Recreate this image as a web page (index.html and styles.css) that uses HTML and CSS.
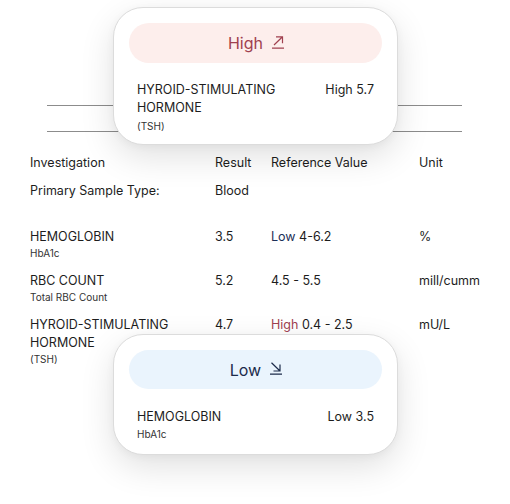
FILE: index.html
```html
<!DOCTYPE html>
<html>
<head>
<meta charset="utf-8">
<link rel="stylesheet" href="styles.css">
</head>
<body>
<div class="page">
  <div class="rules">
    <div class="rule"></div>
    <div class="rule"></div>
  </div>
  <div class="table">
    <div class="row head">
      <div>Investigation</div><div>Result</div><div>Reference Value</div><div>Unit</div>
    </div>
    <div class="row sample">
      <div>Primary Sample Type:</div><div>Blood</div><div></div><div></div>
    </div>
    <div class="row">
      <div>HEMOGLOBIN<div class="sub">HbA1c</div></div><div>3.5</div><div><span class="low">Low</span> 4-6.2</div><div>%</div>
    </div>
    <div class="row">
      <div>RBC COUNT<div class="sub">Total RBC Count</div></div><div>5.2</div><div>4.5 - 5.5</div><div>mill/cumm</div>
    </div>
    <div class="row">
      <div>HYROID-STIMULATING HORMONE<div class="sub">(TSH)</div></div><div>4.7</div><div><span class="high">High</span> 0.4 - 2.5</div><div>mU/L</div>
    </div>
  </div>

  <div class="card card-top">
    <div class="pill pill-high">High
      <svg class="icon" width="14" height="13" viewBox="0 0 14 13" fill="none" stroke="currentColor" stroke-width="1.2">
        <path d="M3 9 L11.5 0.8 M5 0.8 H11.5 V7.2 M1 12.2 H13"/>
      </svg>
    </div>
    <div class="card-row">
      <div class="card-name">HYROID-STIMULATING HORMONE<div class="card-sub">(TSH)</div></div>
      <div class="card-val">High 5.7</div>
    </div>
  </div>

  <div class="card card-bottom">
    <div class="pill pill-low">Low
      <svg class="icon" width="14" height="13" viewBox="0 0 14 13" fill="none" stroke="currentColor" stroke-width="1.2">
        <path d="M2.5 0.8 L11 9 M11 2.5 V9 H4.5 M1 12.2 H13"/>
      </svg>
    </div>
    <div class="card-row">
      <div class="card-name">HEMOGLOBIN<div class="card-sub tight">HbA1c</div></div>
      <div class="card-val">Low 3.5</div>
    </div>
  </div>
</div>
</body>
</html>
```
FILE: styles.css
```css
* { box-sizing: border-box; }
html, body { margin: 0; padding: 0; background: #ffffff; }
body {
  font-family: Inter, "Noto Sans", sans-serif;
  color: #1d1d1d;
  font-size: 12.5px;
  letter-spacing: 0;
}
.page {
  position: relative;
  width: 510px;
  height: 504px;
  padding: 0 30px;
}
.rules {
  padding: 105px 18px 0 17px;
  display: flex;
  flex-direction: column;
  gap: 25px;
}
.rule {
  height: 1px;
  background: #8c8c8c;
}
.table {
  margin-top: 22px;
  display: flex;
  flex-direction: column;
  gap: 12px;
}
.row {
  display: grid;
  grid-template-columns: 185px 56px 148px auto;
  line-height: 18px;
}
.row > div:first-child { padding-right: 28px; }
.row.head { margin-bottom: -2px; }
.row.sample { margin-bottom: 16px; }
.sub {
  font-size: 10px;
  line-height: 14px;
  color: #333;
}
.low { color: #1c2f57; }
.high { color: #a0404f; }

.card {
  position: absolute;
  left: 113px;
  width: 285px;
  background: #fff;
  border: 1px solid #dcdcdc;
  border-radius: 30px;
  box-shadow: 0 12px 34px rgba(0,0,0,0.12), 0 2px 8px rgba(0,0,0,0.04);
  padding: 15px 15px 0 15px;
}
.card-top { top: 7px; height: 138px; }
.card-bottom { top: 334px; height: 121px; }
.pill {
  height: 40px;
  border-radius: 20px;
  display: flex;
  align-items: center;
  justify-content: center;
  gap: 8px;
  font-size: 16px;
  padding-left: 2px;
}
.pill-high { background: #fdeeec; color: #a0404f; }
.pill-low { background: #eaf4fd; color: #1c2b4b; height: 39px; }
.icon { display: block; margin-top: -2px; }
.card-row {
  display: flex;
  justify-content: space-between;
  padding: 18px 8px 0 8px;
  line-height: 18px;
}
.card-bottom .card-row { padding-top: 19px; }
.card-name { width: 150px; }
.card-sub { font-size: 10px; line-height: 18px; color: #333; }
.card-sub.tight { line-height: 16px; }
.card-val { text-align: right; }
```
